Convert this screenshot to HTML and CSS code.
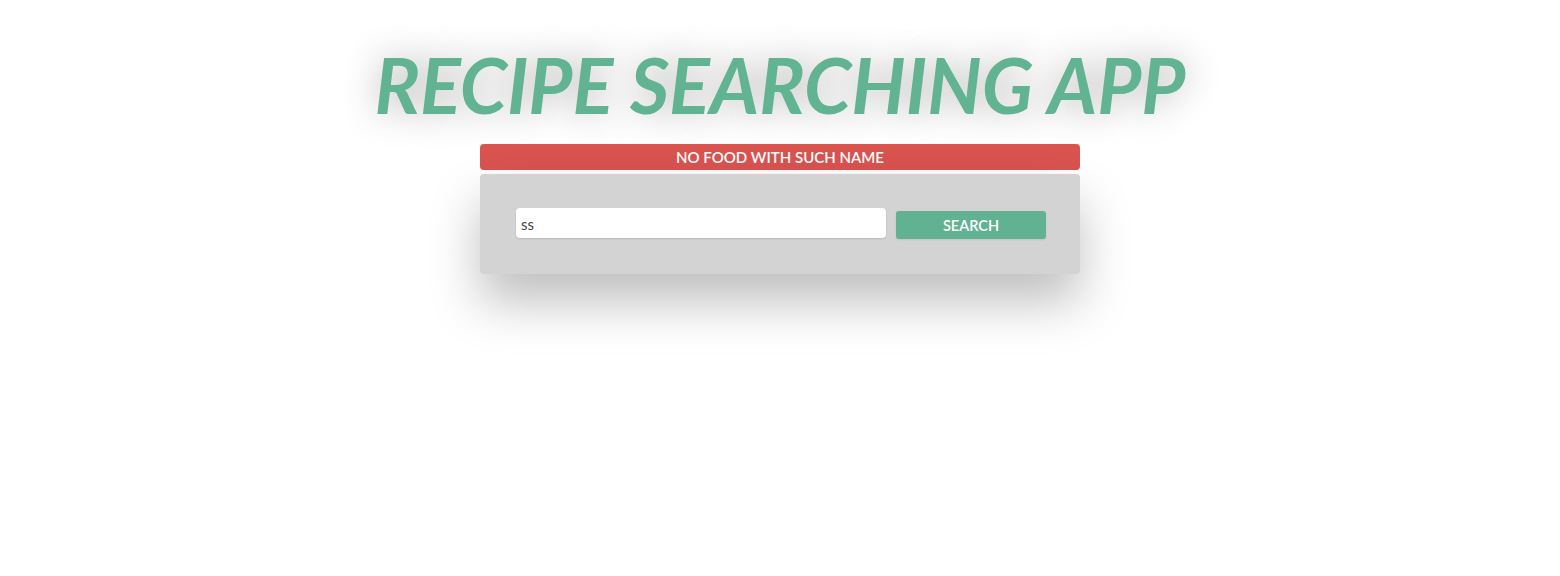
FILE: index.html
```html
<!DOCTYPE html>
<html>
<head>
<meta charset="utf-8">
<link rel="stylesheet" href="styles.css">
</head>
<body>
<div class="app">
  <h1 class="title">RECIPE SEARCHING APP</h1>
  <div class="alert">NO FOOD WITH SUCH NAME</div>
  <form class="search-form">
    <input class="search-input" type="text" value="ss">
    <button class="search-btn" type="button">SEARCH</button>
  </form>
</div>
</body>
</html>
```
FILE: styles.css
```css
html, body {
  margin: 0;
  padding: 0;
  background: #ffffff;
}
body {
  font-family: Lato, "Open Sans", sans-serif;
  min-height: 100vh;
}
.app {
  display: flex;
  flex-direction: column;
  align-items: center;
  padding-top: 44px;
  min-height: 100vh;
  box-sizing: border-box;
}
.title {
  margin: 0 0 18px 0;
  font-size: 76px;
  line-height: 82px;
  font-style: italic;
  font-weight: 700;
  color: #62b391;
  text-shadow: 0 0 36px rgba(0, 0, 0, 0.3);
}
.alert {
  width: 600px;
  height: 26px;
  box-sizing: border-box;
  background: #d9534f;
  color: #ffffff;
  border-radius: 4px;
  text-align: center;
  font-size: 15px;
  line-height: 27px;
  font-weight: 600;
}
.search-form {
  margin-top: 4px;
  width: 600px;
  height: 100px;
  box-sizing: border-box;
  background: #d3d3d3;
  border-radius: 4px;
  padding: 0 34px 0 36px;
  display: flex;
  align-items: center;
  gap: 10px;
  box-shadow: 0 28px 50px rgba(0, 0, 0, 0.25);
}
.search-input {
  width: 370px;
  height: 30px;
  box-sizing: border-box;
  border: none;
  border-radius: 4px;
  background: #ffffff;
  padding: 2px 5px 0;
  font-family: Lato, "Open Sans", sans-serif;
  font-size: 15px;
  color: #444;
  outline: none;
  box-shadow: 0 1px 2px rgba(0, 0, 0, 0.12);
  margin-top: -2px;
}
.search-btn {
  width: 150px;
  height: 28px;
  border: none;
  border-radius: 3px;
  background: #61b292;
  color: #ffffff;
  font-family: Lato, "Open Sans", sans-serif;
  font-size: 14.5px;
  font-weight: 600;
  margin-top: 2px;
  padding: 0;
  box-shadow: 0 1px 2px rgba(0, 0, 0, 0.08);
}
```
